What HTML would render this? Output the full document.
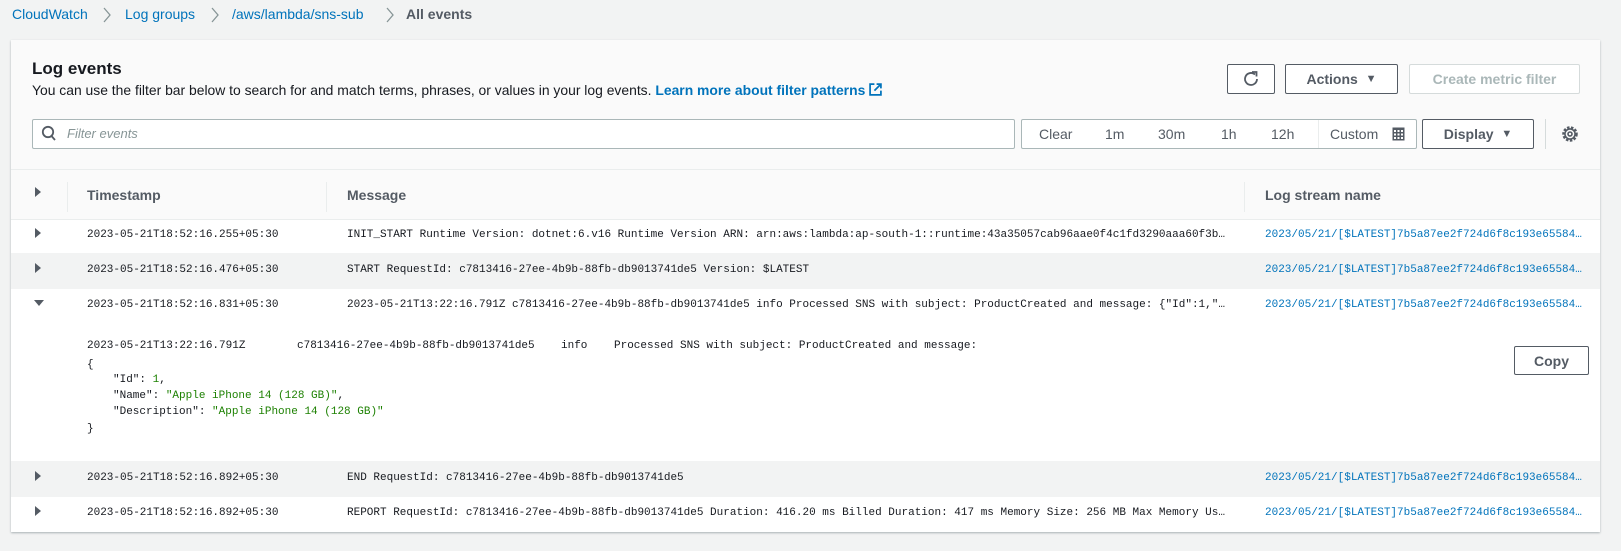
<!DOCTYPE html>
<html><head><meta charset="utf-8">
<style>
*{box-sizing:border-box;margin:0;padding:0}
body{width:1621px;height:551px;background:#f2f3f3;font-family:"Liberation Sans",sans-serif;position:relative;overflow:hidden;color:#16191f}
.a{position:absolute;white-space:nowrap}
.bc{font-size:14px;top:6px;color:#0073bb}
.panel{position:absolute;left:11px;top:40px;width:1589px;height:492px;background:#fafafa;box-shadow:0 1px 2px rgba(0,28,36,.3);}
.btn{position:absolute;border:1px solid #545b64;border-radius:2px;background:#fff;font-weight:bold;font-size:14px;color:#545b64;display:flex;align-items:center;justify-content:center}
.mono{font-family:"Liberation Mono",monospace;font-size:11px;color:#16191f}
.tri{position:absolute;width:0;height:0;border-top:5px solid transparent;border-bottom:5px solid transparent;border-left:6px solid #545b64}
.trid{position:absolute;width:0;height:0;border-left:5px solid transparent;border-right:5px solid transparent;border-top:6px solid #545b64}
.link{color:#0073bb}
.row{position:absolute;left:11px;width:1589px}
.th{font-size:14px;font-weight:bold;color:#545b64;top:187px}
.tr span{font-size:14px;color:#545b64}
</style></head><body>
<div class="a bc" style="left:12px">CloudWatch</div>
<svg class="a" style="left:102px;top:6px" width="10" height="18" viewBox="0 0 10 18"><path d="M2 2l6 7-6 7" fill="none" stroke="#879596" stroke-width="1.3"/></svg>
<div class="a bc" style="left:125px">Log groups</div>
<svg class="a" style="left:210px;top:6px" width="10" height="18" viewBox="0 0 10 18"><path d="M2 2l6 7-6 7" fill="none" stroke="#879596" stroke-width="1.3"/></svg>
<div class="a bc" style="left:232px">/aws/lambda/sns-sub</div>
<svg class="a" style="left:385px;top:6px" width="10" height="18" viewBox="0 0 10 18"><path d="M2 2l6 7-6 7" fill="none" stroke="#879596" stroke-width="1.3"/></svg>
<div class="a bc" style="left:406px;color:#545b64;font-weight:bold">All events</div>

<div class="panel"></div>
<div class="a" style="left:32px;top:59px;font-size:17px;font-weight:bold">Log events</div>
<div class="a" style="left:32px;top:82px;font-size:13.9px;color:#16191f">You can use the filter bar below to search for and match terms, phrases, or values in your log events. <b class="link">Learn more about filter patterns</b> <svg width="13" height="13" viewBox="0 0 12 12" style="vertical-align:-1px"><path d="M5 1H1v10h10V7M7 1h4v4M11 1L5 7" fill="none" stroke="#0073bb" stroke-width="1.6"/></svg></div>

<div class="btn" style="left:1227px;top:64px;width:48px;height:30px"><svg width="18" height="18" viewBox="0 0 18 18"><path d="M13 4.5A6 6 0 1 0 15 9" fill="none" stroke="#545b64" stroke-width="1.8"/><path d="M10 2h4.5v4.5" fill="none" stroke="#545b64" stroke-width="1.8"/></svg></div>
<div class="btn" style="left:1285px;top:64px;width:113px;height:30px">Actions&nbsp;&nbsp;<span style="font-size:11px">▼</span></div>
<div class="btn" style="left:1409px;top:64px;width:171px;height:30px;border-color:#d5dbdb;color:#aab7b8">Create metric filter</div>

<div class="a" style="left:32px;top:119px;width:983px;height:30px;background:#fff;border:1px solid #aab7b8;border-radius:2px"></div>
<svg class="a" style="left:41px;top:125px" width="16" height="17" viewBox="0 0 16 17"><circle cx="7" cy="7" r="5.2" fill="none" stroke="#545b64" stroke-width="1.8"/><path d="M10.5 11l3.5 4" stroke="#545b64" stroke-width="1.8"/></svg>
<div class="a" style="left:67px;top:126px;font-size:13px;font-style:italic;color:#879596">Filter events</div>

<div class="a" style="left:1021px;top:119px;width:396px;height:30px;background:#fff;border:1px solid #aab7b8;border-radius:2px"></div>
<div class="a tr" style="left:1039px;top:126px"><span>Clear</span></div>
<div class="a tr" style="left:1105px;top:126px"><span>1m</span></div>
<div class="a tr" style="left:1158px;top:126px"><span>30m</span></div>
<div class="a tr" style="left:1221px;top:126px"><span>1h</span></div>
<div class="a tr" style="left:1271px;top:126px"><span>12h</span></div>
<div class="a" style="left:1318px;top:120px;width:1px;height:28px;background:#eaeded"></div>
<div class="a tr" style="left:1330px;top:126px"><span>Custom</span></div>
<svg class="a" style="left:1392px;top:127px" width="13" height="14" viewBox="0 0 13 14"><rect x="0.5" y="0.5" width="12" height="13" fill="#545b64"/><g fill="#fff"><rect x="2" y="3" width="2" height="2"/><rect x="5.5" y="3" width="2" height="2"/><rect x="9" y="3" width="2" height="2"/><rect x="2" y="6.5" width="2" height="2"/><rect x="5.5" y="6.5" width="2" height="2"/><rect x="9" y="6.5" width="2" height="2"/><rect x="2" y="10" width="2" height="2"/><rect x="5.5" y="10" width="2" height="2"/><rect x="9" y="10" width="2" height="2"/></g></svg>
<div class="btn" style="left:1422px;top:119px;width:112px;height:30px">Display&nbsp;&nbsp;<span style="font-size:11px">▼</span></div>
<div class="a" style="left:1545px;top:119px;width:1px;height:30px;background:#d5dbdb"></div>
<svg class="a" style="left:1561px;top:125px" width="18" height="18" viewBox="0 0 16 16"><circle cx="8" cy="8" r="5.8" fill="none" stroke="#545b64" stroke-width="2.2" stroke-dasharray="2.2 1.3"/><circle cx="8" cy="8" r="4.5" fill="none" stroke="#545b64" stroke-width="1.4"/><circle cx="8" cy="8" r="1.8" fill="none" stroke="#545b64" stroke-width="1.4"/></svg>

<div class="row" style="top:169px;height:1px;background:#eaeded"></div>
<div class="tri" style="left:35px;top:187px"></div>
<div class="a" style="left:67px;top:182px;width:1px;height:30px;background:#eaeded"></div>
<div class="a" style="left:326px;top:182px;width:1px;height:30px;background:#eaeded"></div>
<div class="a" style="left:1244px;top:182px;width:1px;height:30px;background:#eaeded"></div>
<div class="a th" style="left:87px">Timestamp</div>
<div class="a th" style="left:347px">Message</div>
<div class="a th" style="left:1265px">Log stream name</div>

<div class="row" style="top:219px;height:34px;background:#fff;border-top:1px solid #eaeded"></div>
<div class="row" style="top:253px;height:36px;background:#f2f3f3"></div>
<div class="row" style="top:289px;height:172px;background:#fff"></div>
<div class="row" style="top:461px;height:36px;background:#f2f3f3"></div>
<div class="row" style="top:497px;height:35px;background:#fff"></div>

<div class="tri" style="left:35px;top:228px"></div>
<div class="a mono" style="left:87px;top:229px">2023-05-21T18:52:16.255+05:30</div>
<div class="a mono" style="left:347px;top:229px">INIT_START Runtime Version: dotnet:6.v16 Runtime Version ARN: arn:aws:lambda:ap-south-1::runtime:43a35057cab96aae0f4c1fd3290aaa60f3b…</div>
<div class="a mono link" style="left:1265px;top:229px">2023/05/21/[$LATEST]7b5a87ee2f724d6f8c193e65584…</div>

<div class="tri" style="left:35px;top:263px"></div>
<div class="a mono" style="left:87px;top:264px">2023-05-21T18:52:16.476+05:30</div>
<div class="a mono" style="left:347px;top:264px">START RequestId: c7813416-27ee-4b9b-88fb-db9013741de5 Version: $LATEST</div>
<div class="a mono link" style="left:1265px;top:264px">2023/05/21/[$LATEST]7b5a87ee2f724d6f8c193e65584…</div>

<div class="trid" style="left:34px;top:300px"></div>
<div class="a mono" style="left:87px;top:299px">2023-05-21T18:52:16.831+05:30</div>
<div class="a mono" style="left:347px;top:299px">2023-05-21T13:22:16.791Z c7813416-27ee-4b9b-88fb-db9013741de5 info Processed SNS with subject: ProductCreated and message: {"Id":1,"…</div>
<div class="a mono link" style="left:1265px;top:299px">2023/05/21/[$LATEST]7b5a87ee2f724d6f8c193e65584…</div>

<div class="a mono" style="left:87px;top:340px">2023-05-21T13:22:16.791Z</div>
<div class="a mono" style="left:297px;top:340px">c7813416-27ee-4b9b-88fb-db9013741de5</div>
<div class="a mono" style="left:561px;top:340px">info</div>
<div class="a mono" style="left:614px;top:340px">Processed SNS with subject: ProductCreated and message:</div>
<div class="a mono" style="left:87px;top:359px">{</div>
<div class="a mono" style="left:113px;top:374px">"Id": <span style="color:#1d8102">1</span>,</div>
<div class="a mono" style="left:113px;top:390px">"Name": <span style="color:#1d8102">"Apple iPhone 14 (128 GB)"</span>,</div>
<div class="a mono" style="left:113px;top:406px">"Description": <span style="color:#1d8102">"Apple iPhone 14 (128 GB)"</span></div>
<div class="a mono" style="left:87px;top:423px">}</div>
<div class="btn" style="left:1514px;top:346px;width:75px;height:29px">Copy</div>

<div class="tri" style="left:35px;top:471px"></div>
<div class="a mono" style="left:87px;top:472px">2023-05-21T18:52:16.892+05:30</div>
<div class="a mono" style="left:347px;top:472px">END RequestId: c7813416-27ee-4b9b-88fb-db9013741de5</div>
<div class="a mono link" style="left:1265px;top:472px">2023/05/21/[$LATEST]7b5a87ee2f724d6f8c193e65584…</div>

<div class="tri" style="left:35px;top:506px"></div>
<div class="a mono" style="left:87px;top:507px">2023-05-21T18:52:16.892+05:30</div>
<div class="a mono" style="left:347px;top:507px">REPORT RequestId: c7813416-27ee-4b9b-88fb-db9013741de5 Duration: 416.20 ms Billed Duration: 417 ms Memory Size: 256 MB Max Memory Us…</div>
<div class="a mono link" style="left:1265px;top:507px">2023/05/21/[$LATEST]7b5a87ee2f724d6f8c193e65584…</div>
</body></html>
